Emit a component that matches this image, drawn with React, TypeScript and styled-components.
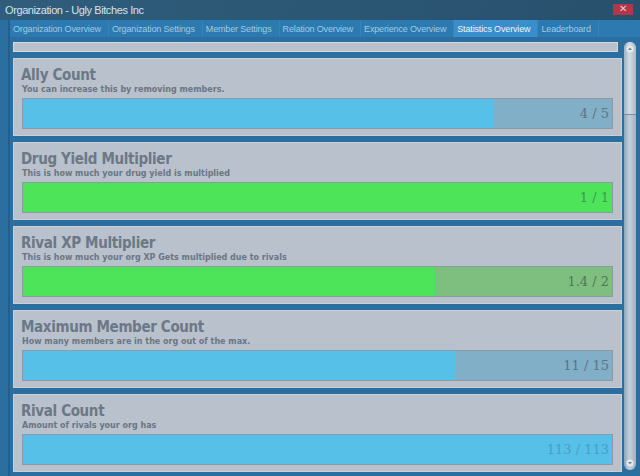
import React from "react";
import styled, { createGlobalStyle } from "styled-components";

type Stat = {
  title: string;
  hint: string;
  value: number;
  max: number;
  label: string;
  tone: "blue" | "green";
};

const stats: Stat[] = [
  { title: "Ally Count", hint: "You can increase this by removing members.", value: 4, max: 5, label: "4 / 5", tone: "blue" },
  { title: "Drug Yield Multiplier", hint: "This is how much your drug yield is multiplied", value: 1, max: 1, label: "1 / 1", tone: "green" },
  { title: "Rival XP Multiplier", hint: "This is how much your org XP Gets multiplied due to rivals", value: 1.4, max: 2, label: "1.4 / 2", tone: "green" },
  { title: "Maximum Member Count", hint: "How many members are in the org out of the max.", value: 11, max: 15, label: "11 / 15", tone: "blue" },
  { title: "Rival Count", hint: "Amount of rivals your org has", value: 113, max: 113, label: "113 / 113", tone: "blue" },
];

const tabs = [
  "Organization Overview",
  "Organization Settings",
  "Member Settings",
  "Relation Overview",
  "Experience Overview",
  "Statistics Overview",
  "Leaderboard",
];

const tones = {
  blue: { fill: "#56c0e8", track: "#80afc7", full: "#4a9ec4", rest: "#5f7484" },
  green: { fill: "#4de45a", track: "#7ebf80", full: "#3f9a48", rest: "#4d7a55" },
};

const GlobalStyle = createGlobalStyle`
  html, body { margin: 0; padding: 0; background: #2a6a98; }
  * { box-sizing: border-box; }
`;

const Window = styled.div`
  width: 640px;
  height: 476px;
  display: flex;
  flex-direction: column;
  overflow: hidden;
  background: #2b6fa0;
  font-family: "Liberation Sans", Arial, sans-serif;
`;

const TitleBar = styled.div`
  height: 20px;
  flex: none;
  display: flex;
  align-items: center;
  justify-content: space-between;
  padding: 0 7px 0 5px;
  background: linear-gradient(100deg, #2f5d7b 0%, #2b5674 55%, #27506c 100%);
  color: #d6e3ec;
  font-size: 11px;
  letter-spacing: -0.4px;
`;

const CloseButton = styled.div`
  width: 20px;
  height: 11px;
  margin-top: -2px;
  display: flex;
  align-items: center;
  justify-content: center;
  background: #b3374a;
  color: #f0c8cf;
  font-size: 10px;
  line-height: 1;
`;

const Body = styled.div`
  flex: 1;
  display: flex;
  flex-direction: column;
  margin-left: 8px;
  border-left: 2px solid #245e8a;
  min-height: 0;
`;

const TabBar = styled.div`
  height: 17px;
  flex: none;
  display: flex;
  align-items: stretch;
  background: #2d7ab0;
`;

const Tab = styled.div<{ $active?: boolean }>`
  display: flex;
  align-items: center;
  padding: 0 7px 0 3px;
  font-size: 9px;
  letter-spacing: -0.15px;
  color: ${(p) => (p.$active ? "#eef5fb" : "#9ecae6")};
  background: ${(p) => (p.$active ? "#3a8ecb" : "transparent")};
  border-right: 1px solid #3583bb;
  white-space: nowrap;
`;

const Content = styled.div`
  flex: 1;
  display: flex;
  gap: 2px;
  padding: 5px 4px 6px 3px;
  min-height: 0;
`;

const List = styled.div`
  flex: 1;
  display: flex;
  flex-direction: column;
  gap: 6px;
  min-width: 0;
`;

const Strip = styled.div`
  height: 10px;
  flex: none;
  margin-right: 4px;
  background: #b9c2cc;
  border: 1px solid #d3dae1;
`;

const Panel = styled.div`
  flex: none;
  height: 78px;
  display: flex;
  flex-direction: column;
  padding: 8px 8px 0 7px;
  background: #b8c1cc;
  border: 1px solid #c9d0d8;
`;

const Title = styled.div`
  font-family: "DejaVu Sans", Verdana, sans-serif;
  font-stretch: condensed;
  font-weight: bold;
  font-size: 15px;
  line-height: 16px;
  letter-spacing: -0.35px;
  color: #6c7886;
`;

const Hint = styled.div`
  margin-top: 2px;
  padding-left: 1px;
  font-family: "DejaVu Sans", Verdana, sans-serif;
  font-weight: bold;
  font-size: 8px;
  line-height: 10px;
  color: #6a7683;
`;

const Track = styled.div<{ $tone: "blue" | "green" }>`
  margin: 3px 0 0 1px;
  height: 31px;
  display: grid;
  border: 1px solid #8d99a4;
  background: ${(p) => tones[p.$tone].track};
`;

const Fill = styled.div<{ $tone: "blue" | "green" }>`
  grid-area: 1 / 1;
  height: 100%;
  background: ${(p) => tones[p.$tone].fill};
`;

const Value = styled.div<{ $color: string }>`
  grid-area: 1 / 1;
  align-self: center;
  justify-self: end;
  padding-right: 3px;
  font-family: "DejaVu Serif", "Liberation Serif", serif;
  font-size: 13px;
  color: ${(p) => p.$color};
`;

const ScrollBar = styled.div`
  width: 12px;
  flex: none;
  display: flex;
  flex-direction: column;
  border-radius: 6px;
  background: linear-gradient(90deg, #8ea6b8, #c3cfd9 45%, #9fb2c1);
  overflow: hidden;
`;

const Thumb = styled.div`
  height: 73px;
  flex: none;
  display: flex;
  justify-content: center;
  padding-top: 3px;
  border-bottom: 1px solid #7890a2;
  background: linear-gradient(90deg, #9fb3c3, #d2dce4 45%, #a9bac8);
`;

const ScrollRest = styled.div`
  flex: 1;
  display: flex;
  align-items: flex-end;
  justify-content: center;
  padding-bottom: 3px;
`;

const Arrow = ({ down }: { down?: boolean }) => (
  <svg width="8" height="8" viewBox="0 0 8 8">
    <circle cx="4" cy="4" r="3.6" fill="#e4eaef" />
    <path d={down ? "M2 3 L6 3 L4 5.6 Z" : "M2 5 L6 5 L4 2.4 Z"} fill="#6f8596" />
  </svg>
);

const StatPanel = ({ stat }: { stat: Stat }) => {
  const tone = tones[stat.tone];
  const pct = Math.min(100, (stat.value / stat.max) * 100);
  return (
    <Panel>
      <Title>{stat.title}</Title>
      <Hint>{stat.hint}</Hint>
      <Track $tone={stat.tone}>
        <Fill $tone={stat.tone} style={{ width: `${pct}%` }} />
        <Value $color={pct >= 100 ? tone.full : tone.rest}>{stat.label}</Value>
      </Track>
    </Panel>
  );
};

export default function App() {
  return (
    <>
      <GlobalStyle />
      <Window>
        <TitleBar>
          <span>Organization - Ugly Bitches Inc</span>
          <CloseButton>✕</CloseButton>
        </TitleBar>
        <Body>
          <TabBar>
            {tabs.map((t) => (
              <Tab key={t} $active={t === "Statistics Overview"}>
                {t}
              </Tab>
            ))}
          </TabBar>
          <Content>
            <List>
              <Strip />
              {stats.map((s) => (
                <StatPanel key={s.title} stat={s} />
              ))}
            </List>
            <ScrollBar>
              <Thumb>
                <Arrow />
              </Thumb>
              <ScrollRest>
                <Arrow down />
              </ScrollRest>
            </ScrollBar>
          </Content>
        </Body>
      </Window>
    </>
  );
}
